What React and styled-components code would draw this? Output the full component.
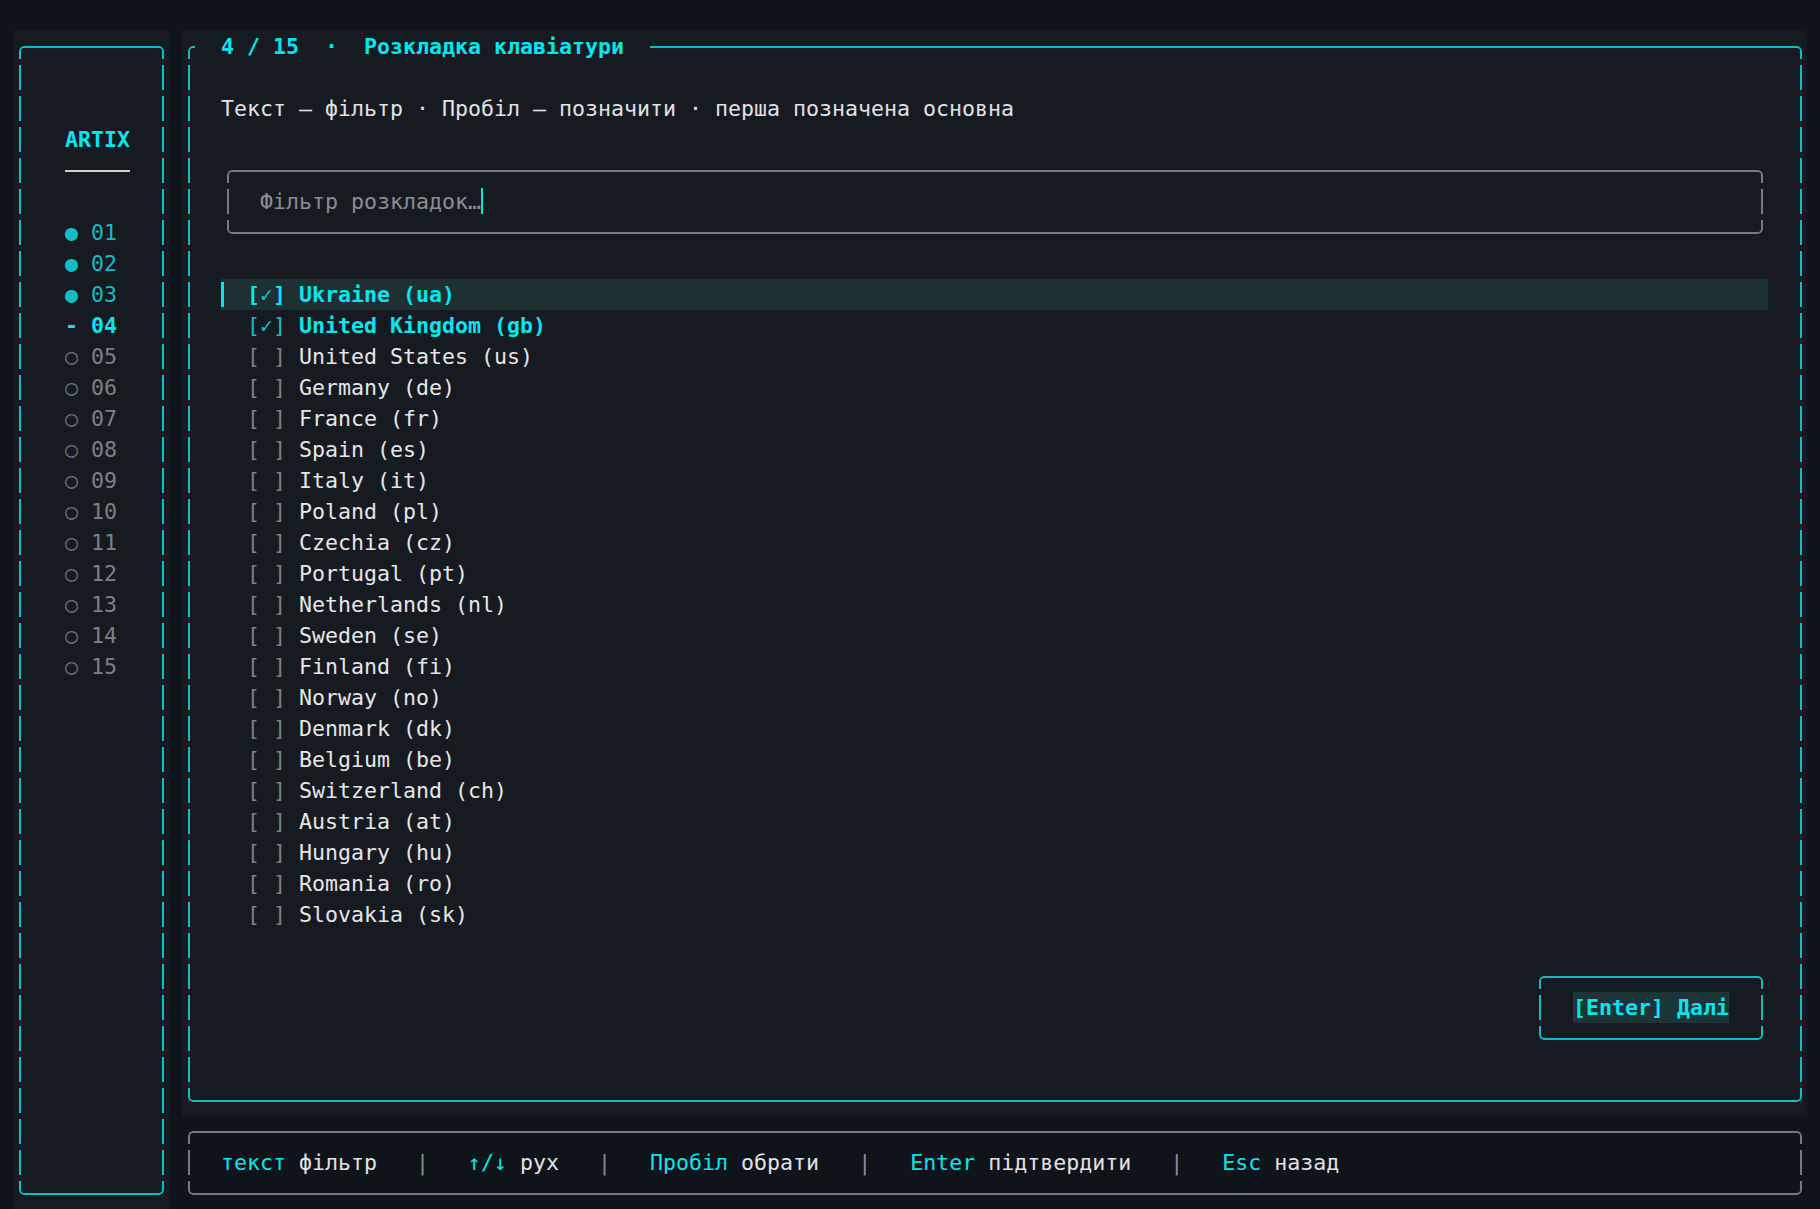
import React from "react";
import styled, { createGlobalStyle } from "styled-components";

const teal = "#13bcc4";
const cyan = "#00e6ee";
const grayLine = "#77797d";
const text = "#e6e6e6";
const dim = "#7d8084";
const panel = "#161b22";

const GlobalStyle = createGlobalStyle`
  html, body {
    margin: 0;
    padding: 0;
    background: #0f131a;
  }
  body {
    font-family: "DejaVu Sans Mono", "Liberation Mono", monospace;
    font-size: 21.6px;
    line-height: 31px;
    color: ${text};
  }
`;

// one dash per terminal row: visible from row top + 2.5 to row top + 28
const dashMask = `
  linear-gradient(#000 0 0) center / calc(100% - 8px) 100% no-repeat,
  linear-gradient(#000 0 25.5px, transparent 25.5px) left 0 top -12px / 4px 31px repeat-y,
  linear-gradient(#000 0 25.5px, transparent 25.5px) right 0 top -12px / 4px 31px repeat-y
`;

const Screen = styled.div`
  display: grid;
  grid-template-columns: 13px 156px 13px 1625px 13px;
  grid-template-rows: 31px 1085px 93px;
  width: 1820px;
  height: 1209px;
  overflow: hidden;
`;

const Sidebar = styled.aside`
  grid-column: 2;
  grid-row: 2 / 4;
  background: ${panel};
  display: flex;
  flex-direction: column;
`;

const MainPanel = styled.main`
  grid-column: 4;
  grid-row: 2;
  background: ${panel};
  display: flex;
  flex-direction: column;
`;

const Footer = styled.footer`
  grid-column: 4;
  grid-row: 3;
  display: flex;
  flex-direction: column;
`;

const Frame = styled.div`
  position: relative;
  flex: ${(p) => (p.$grow ? "1" : "none")};
  display: flex;
  flex-direction: column;
  margin: 14.5px 5.5px;
  padding: 16.5px 7.5px;
  &::before {
    content: "";
    position: absolute;
    inset: 0;
    border: 2px solid ${(p) => p.$color};
    border-radius: 5px;
    pointer-events: none;
    -webkit-mask: ${dashMask};
    mask: ${dashMask};
  }
`;

const Title = styled.div`
  position: absolute;
  top: -14.5px;
  left: 7.5px;
  height: 31px;
  padding: 0 26px;
  background: ${panel};
  color: ${cyan};
  font-weight: 700;
  white-space: pre;
`;

const Brand = styled.div`
  margin-top: 62px;
  padding-left: 39px;
  height: 31px;
  color: ${cyan};
  font-weight: 700;
`;

const Rule = styled.div`
  height: 31px;
  width: 65px;
  margin-left: 39px;
  background: linear-gradient(#cfcfcf, #cfcfcf) center / 100% 2px no-repeat;
`;

const Steps = styled.div`
  margin-top: 31px;
  display: flex;
  flex-direction: column;
`;

const stepColor = { done: teal, current: cyan, todo: dim };

const Step = styled.div`
  height: 31px;
  padding-left: 39px;
  white-space: pre;
  color: ${(p) => stepColor[p.$state]};
  font-weight: ${(p) => (p.$state === "current" ? 700 : 400)};
`;

const StepMark = styled.span`
  color: ${(p) => (p.$state === "todo" ? "#6c6f73" : stepColor[p.$state])};
`;

const Hint = styled.div`
  margin-top: 31px;
  padding-left: 26px;
  height: 31px;
  white-space: pre;
  color: #e2e2e2;
`;

const FilterRow = styled.div`
  margin: 31px 26px 0;
  display: flex;
  flex-direction: column;
`;

const FilterField = styled.div`
  height: 31px;
  padding-left: 26px;
  white-space: pre;
  color: #8a8d91;
`;

const Cursor = styled.span`
  display: inline-block;
  vertical-align: top;
  width: 2px;
  height: 26px;
  margin-top: 2px;
  background: ${cyan};
`;

const List = styled.div`
  margin-top: 31px;
  display: flex;
  flex-direction: column;
`;

const Option = styled.div`
  height: 31px;
  margin: 0 26px;
  display: flex;
  background: ${(p) => (p.$active ? "#1e3034" : "transparent")};
`;

const Marker = styled.span`
  flex: none;
  width: 26px;
  &::before {
    content: "";
    display: block;
    width: 3px;
    height: 25px;
    margin-top: 3px;
    background: ${(p) => (p.$active ? cyan : "transparent")};
  }
`;

const OptionText = styled.span`
  white-space: pre;
`;

const Bracket = styled.span`
  color: ${(p) => (!p.$checked ? dim : p.$active ? cyan : teal)};
  font-weight: ${(p) => (p.$active ? 700 : 400)};
`;

const Tick = styled.span`
  color: ${teal};
`;

const Name = styled.span`
  color: ${(p) => (p.$checked ? cyan : text)};
  font-weight: ${(p) => (p.$checked ? 700 : 400)};
`;

const Actions = styled.div`
  margin-top: auto;
  margin-bottom: 31px;
  padding-right: 26px;
  display: flex;
  justify-content: flex-end;
`;

const NextLabel = styled.div`
  height: 31px;
  padding: 0 26px;
  white-space: pre;
  display: flex;
`;

const NextText = styled.span`
  background: #1e3538;
  color: ${cyan};
  font-weight: 700;
`;

const Keys = styled.div`
  height: 31px;
  padding-left: 26px;
  white-space: pre;
`;

const Key = styled.span`
  color: ${cyan};
`;

const Label = styled.span`
  color: #e2e2e2;
`;

const Sep = styled.span`
  color: #8a8d91;
`;

const layouts = [
  ["Ukraine (ua)", true],
  ["United Kingdom (gb)", true],
  ["United States (us)"],
  ["Germany (de)"],
  ["France (fr)"],
  ["Spain (es)"],
  ["Italy (it)"],
  ["Poland (pl)"],
  ["Czechia (cz)"],
  ["Portugal (pt)"],
  ["Netherlands (nl)"],
  ["Sweden (se)"],
  ["Finland (fi)"],
  ["Norway (no)"],
  ["Denmark (dk)"],
  ["Belgium (be)"],
  ["Switzerland (ch)"],
  ["Austria (at)"],
  ["Hungary (hu)"],
  ["Romania (ro)"],
  ["Slovakia (sk)"],
];

const keys = [
  ["текст", "фільтр"],
  ["↑/↓", "рух"],
  ["Пробіл", "обрати"],
  ["Enter", "підтвердити"],
  ["Esc", "назад"],
];

const current = 4;

const App = () => {
  return (
    <>
      <GlobalStyle />
      <Screen>
        <Sidebar>
          <Frame $color={teal} $grow>
            <Brand>ARTIX</Brand>
            <Rule />
            <Steps>
              {Array.from({ length: 15 }, (_, i) => {
                const n = i + 1;
                const state = n < current ? "done" : n === current ? "current" : "todo";
                const mark = state === "done" ? "●" : state === "current" ? "-" : "○";
                return (
                  <Step key={n} $state={state}>
                    <StepMark $state={state}>{mark}</StepMark>
                    {" " + String(n).padStart(2, "0")}
                  </Step>
                );
              })}
            </Steps>
          </Frame>
        </Sidebar>

        <MainPanel>
          <Frame $color={teal} $grow>
            <Title>4 / 15  ·  Розкладка клавіатури</Title>
            <Hint>Текст — фільтр · Пробіл — позначити · перша позначена основна</Hint>
            <FilterRow>
              <Frame $color={grayLine}>
                <FilterField>
                  Фільтр розкладок…<Cursor />
                </FilterField>
              </Frame>
            </FilterRow>
            <List>
              {layouts.map(([name, checked], i) => {
                const active = i === 0;
                return (
                  <Option key={name} $active={active}>
                    <Marker $active={active} />
                    <OptionText>
                      <Bracket $checked={checked} $active={active}>[</Bracket>
                      {checked ? <Tick>✓</Tick> : " "}
                      <Bracket $checked={checked} $active={active}>]</Bracket>
                      {" "}
                      <Name $checked={checked}>{name}</Name>
                    </OptionText>
                  </Option>
                );
              })}
            </List>
            <Actions>
              <Frame $color={teal}>
                <NextLabel>
                  <NextText>[Enter] Далі</NextText>
                </NextLabel>
              </Frame>
            </Actions>
          </Frame>
        </MainPanel>

        <Footer>
          <Frame $color={grayLine}>
            <Keys>
              {keys.map(([k, label], i) => (
                <React.Fragment key={k}>
                  {i > 0 && <Sep>{"   |   "}</Sep>}
                  <Key>{k}</Key>
                  <Label>{" " + label}</Label>
                </React.Fragment>
              ))}
            </Keys>
          </Frame>
        </Footer>
      </Screen>
    </>
  );
};

export default App;
